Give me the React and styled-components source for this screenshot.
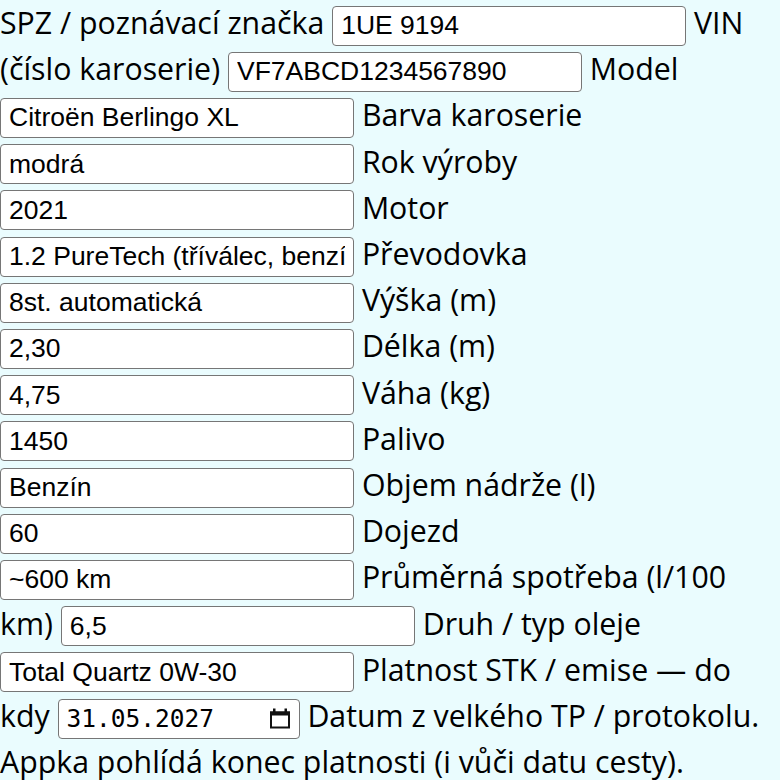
import React from 'react'
import styled, { createGlobalStyle } from 'styled-components'

const GlobalStyle = createGlobalStyle`
  html, body {
    margin: 0;
    padding: 0;
    background: #eafcfe;
  }
`

const Form = styled.form`
  width: 780px;
  font-family: 'Open Sans', 'Noto Sans', sans-serif;
  font-size: 30.3px;
  line-height: 46.2px;
  color: #000;
`

const Field = styled.label`
  display: inline;
`

const Input = styled.input`
  box-sizing: border-box;
  width: ${p => p.$width || 354}px;
  height: 40px;
  padding: 0 8px;
  margin: 0;
  border: 1px solid #767676;
  border-radius: 4px;
  background: #fff;
  font-family: 'Liberation Sans', Arial, sans-serif;
  font-size: 26.5px;
  color: #000;
  vertical-align: baseline;
`

// date picker look-alike: monospace value and a calendar button
const DateBox = styled.span`
  box-sizing: border-box;
  display: inline-flex;
  align-items: center;
  width: 242px;
  height: 40px;
  padding: 0 9px 0 8px;
  border: 1px solid #767676;
  border-radius: 4px;
  background: #fff;
  vertical-align: baseline;
`

const DateText = styled.input`
  flex: 1;
  min-width: 0;
  border: none;
  padding: 0;
  margin: 0;
  background: transparent;
  font-family: 'DejaVu Sans Mono', monospace;
  font-size: 24.5px;
  color: #000;
  outline: none;
`

const CalendarIcon = () => (
  <svg width="20" height="21" viewBox="0 0 20 21" fill="none">
    <rect x="3" y="0.5" width="2.5" height="4" fill="#111" />
    <rect x="14.5" y="0.5" width="2.5" height="4" fill="#111" />
    <rect x="1" y="4.5" width="18" height="15" stroke="#111" strokeWidth="2" />
    <rect x="0" y="3.5" width="20" height="4" fill="#111" />
  </svg>
)

const fields = [
  ['SPZ / poznávací značka', '1UE 9194'],
  ['VIN (číslo karoserie)', 'VF7ABCD1234567890'],
  ['Model', 'Citroën Berlingo XL'],
  ['Barva karoserie', 'modrá'],
  ['Rok výroby', '2021'],
  ['Motor', '1.2 PureTech (tříválec, benzín)'],
  ['Převodovka', '8st. automatická'],
  ['Výška (m)', '2,30'],
  ['Délka (m)', '4,75'],
  ['Váha (kg)', '1450'],
  ['Palivo', 'Benzín'],
  ['Objem nádrže (l)', '60'],
  ['Dojezd', '~600 km'],
  ['Průměrná spotřeba (l/100 km)', '6,5'],
  ['Druh / typ oleje', 'Total Quartz 0W-30'],
]

export default function App() {
  return (
    <>
      <GlobalStyle />
      <Form onSubmit={e => e.preventDefault()}>
        {fields.map(([label, value]) => (
          <React.Fragment key={label}>
            <Field>
              {label} <Input type="text" defaultValue={value} />
            </Field>{' '}
          </React.Fragment>
        ))}
        <Field>
          Platnost STK / emise — do kdy{' '}
          <DateBox>
            <DateText type="text" defaultValue="31.05.2027" />
            <CalendarIcon />
          </DateBox>
        </Field>{' '}
        Datum z velkého TP / protokolu. Appka pohlídá konec platnosti (i vůči datu cesty).
      </Form>
    </>
  )
}
